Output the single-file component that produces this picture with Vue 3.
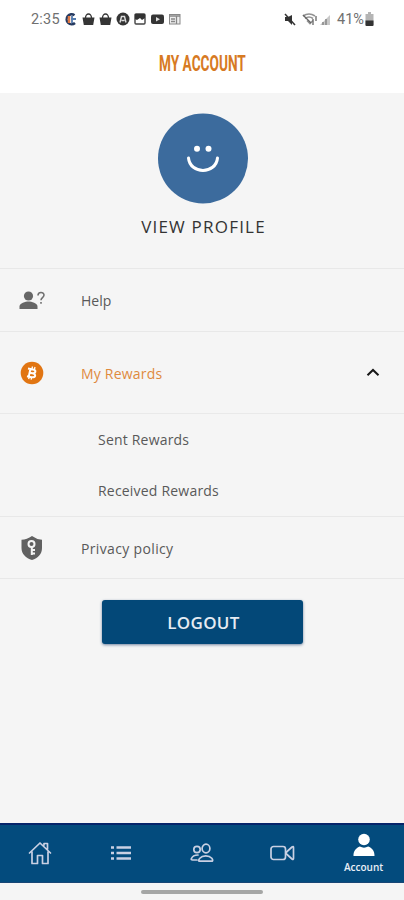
<script setup>
const links = ['Sent Rewards', 'Received Rewards']
</script>

<template>
  <main class="screen">
    <div class="status">
      <span class="clock">2:35</span>
      <svg class="notifs" width="120" height="16" viewBox="0 0 120 16">
        <path d="M10.5 4.2A5 5 0 1 0 11 12" fill="none" stroke="#263a60" stroke-width="2.5" />
        <path d="M5 5v7" stroke="#e07a45" stroke-width="2.5" />
        <path d="M7 8h5M8 5v7" stroke="#557db0" stroke-width="1.8" />
        <g fill="#353535">
          <path d="M18.5 6.5h12l-1.3 7.5h-9.4zM35.5 6.5h12l-1.3 7.5h-9.4z" />
          <path d="M21.5 7a3 4 0 0 1 6 0M38.5 7a3 4 0 0 1 6 0" fill="none" stroke="#353535" stroke-width="1.3" />
          <circle cx="59" cy="8" r="6.5" />
          <rect x="87" y="3.5" width="13" height="9.5" rx="2" />
        </g>
        <path d="M56 11.5l1.5-6h3l1.5 6M57.5 9.500h3" fill="none" stroke="#ddd" stroke-width="1.4" />
        <rect x="71" y="3" width="10" height="10" rx="1" fill="#fff" stroke="#444" stroke-width="1.4" />
        <path d="M71 3h10v4l-3 2-2-2-3 2-2-1z" fill="#333" />
        <path d="M92 6l4 2.200-4 2.200z" fill="#ddd" />
        <rect x="105.500" y="3.500" width="10.500" height="9.500" fill="#eee" stroke="#888" />
        <path d="M105.500 5h10.500M112.500 5v8M107 8h4M107 10.500h4" stroke="#888" stroke-width="1.300" />
      </svg>
      <svg class="signals" width="50" height="16" viewBox="0 0 50 16">
        <path d="M2 6h3l4-2v10L5 10H2z" fill="#333" />
        <path d="M2 3l10 11" stroke="#333" stroke-width="1.500" />
        <path d="M20 5q6-4 12 0M22 7.500q4-3 8 0M24 9.500l3 3 3-3" fill="none" stroke="#929292" stroke-width="1.600" />
        <path d="M20 4l8 8M30 8v6M33 5v5" stroke="#666" stroke-width="1.300" />
        <path d="M37 14l10-10v10z" fill="#c9c9c9" />
        <path d="M40 14v-3M43 14V8" stroke="#888" stroke-width="1.500" />
      </svg>
      <span class="percent">41%</span>
      <svg class="battery" width="9" height="14" viewBox="0 0 9 14">
        <path d="M3 0h3v2h2.500v11q0 1-1 1h-6q-1 0-1-1V2H3z" fill="#b5b5b5" />
        <path d="M.5 8.500h8V13q0 1-1 1h-6q-1 0-1-1z" fill="#333" />
      </svg>
    </div>

    <header class="title"><h1>MY ACCOUNT</h1></header>

    <section class="profile">
      <svg width="91" height="91" viewBox="0 0 91 91">
        <circle cx="46" cy="45.500" r="45" fill="#3c6b9d" />
        <circle cx="40" cy="35.700" r="3" fill="#fff" />
        <circle cx="51.500" cy="35.700" r="3" fill="#fff" />
        <path d="M31.500 45C33 61.500 59 61.500 60.500 45" fill="none" stroke="#fff" stroke-width="3" stroke-linecap="round" />
      </svg>
      <span class="view">VIEW PROFILE</span>
    </section>

    <section class="row help">
      <svg width="27" height="24" viewBox="0 0 27 24">
        <circle cx="9.500" cy="8" r="4.600" fill="#666" />
        <path d="M.5 21v-2.500c0-3.500 6-5 9-5s9 1.500 9 5V21z" fill="#666" />
        <path d="M19 7.500c0-4 6-4 6-.4 0 2.600-3 2.500-3 5.200M22 14v1.800" fill="none" stroke="#707070" stroke-width="1.600" />
      </svg>
      <span>Help</span>
    </section>

    <section class="row rewards">
      <svg width="27" height="24" viewBox="0 0 27 24">
        <circle cx="13" cy="12" r="11.300" fill="#e17512" />
        <g fill="none" stroke="#fff" stroke-width="2">
          <path d="M9 7.500l5 1c4 .8 2.500 4.300-.7 3.700l-2.500-.5M8 15.200l4.500 1c4.500.8 5-3.400.8-4M11.500 7.500l-1.800 8.500" />
          <path d="M13.500 5.500l-.6 2.700M16 6l-.6 2.700M10.300 15.500l-.6 2.700M12.700 16l-.6 2.700" stroke-width="1.300" />
        </g>
      </svg>
      <span>My Rewards</span>
      <svg class="chevron" width="14" height="9" viewBox="0 0 14 9">
        <path d="M1.500 7.300L7 2l5.500 5.300" fill="none" stroke="#171717" stroke-width="2" />
      </svg>
    </section>

    <section class="sublist">
      <div v-for="link in links" :key="link" class="sub"><span>{{ link }}</span></div>
    </section>

    <section class="row privacy">
      <svg width="27" height="26" viewBox="0 0 27 26">
        <path d="M13 1q5 3.700 10 3.700V13c0 6-4 10-10 12C7 23 2.500 19 2.500 13V4.700Q8 4.700 13 1z" fill="#616161" />
        <circle cx="12.500" cy="9" r="3" fill="none" stroke="#f5f5f5" stroke-width="2" />
        <path d="M12.800 12v8M13 15h3M13 18.500h3" stroke="#f5f5f5" stroke-width="2" />
      </svg>
      <span>Privacy policy</span>
    </section>

    <div class="actions"><button><span>LOGOUT</span></button></div>

    <nav>
      <div class="tab">
        <svg width="24" height="24" viewBox="0 0 24 24" class="line">
          <path d="M1.500 12L12 2l10.500 10M4 10.500v12h5.500v-8h5v8H20v-12M16 4V2.500h3.500V8" />
        </svg>
      </div>
      <div class="tab">
        <svg width="22" height="18" viewBox="0 0 22 18">
          <path d="M1 3.500h3M1 9h3M1 14.500h3M6.500 3.500H21M6.500 9H21M6.500 14.500H21" stroke="#c9d0e3" stroke-width="2.700" />
        </svg>
      </div>
      <div class="tab">
        <svg width="24" height="20" viewBox="0 0 24 20" class="line">
          <circle cx="7" cy="6.500" r="3.200" />
          <ellipse cx="16" cy="5.500" rx="3.900" ry="4.300" />
          <path d="M9 18.200h13.200c1-.6.3-2-.4-2.900-2.800-3.200-9.300-3.200-12 0-.9 1-1.500 2.300-.8 2.900zM8 12c-4 0-6 2-6.700 3.700-.3 1 .3 1.300 1.200 1.300H7" />
        </svg>
      </div>
      <div class="tab">
        <svg width="25" height="16" viewBox="0 0 25 16" class="line">
          <rect x="1" y="1.500" width="14.500" height="13" rx="2.500" />
          <path d="M16.500 7l5.500-5q1.500-1 1.500.5v11q0 1.500-1.500.5l-5.500-5z" />
        </svg>
      </div>
      <div class="tab active">
        <svg width="22" height="24" viewBox="0 0 22 24">
          <circle cx="11" cy="6.500" r="5.800" fill="#fff" />
          <path d="M.5 23c-.3-5 3-8.500 6.300-9.500 3 1.500 5.400 1.500 8.400 0 3.500 1 6.600 4.500 6.300 9.500z" fill="#fff" />
        </svg>
        <span>Account</span>
      </div>
    </nav>
    <footer><i></i></footer>
  </main>
</template>

<style>
body { margin: 0; }
</style>

<style scoped>
* { box-sizing: border-box; }
.screen { width: 404px; height: 900px; background: #f5f5f5; font-family: "Open Sans", "Noto Sans", sans-serif; color: #595959; overflow: hidden; display: flex; flex-direction: column; }
svg { display: block; flex: none; }
.status { height: 38px; background: #fff; display: flex; align-items: center; padding: 0 29px 0 31px; font: 14.500px Roboto, sans-serif; color: #707070; flex: none; }
.clock { width: 33px; letter-spacing: .2px; white-space: nowrap; }
.signals { margin-left: 99px; }
.percent { width: 29px; margin-left: 4px; white-space: nowrap; }
.battery { margin-left: -1px; }
.title { height: 55px; flex: none; background: #fff; display: flex; justify-content: center; padding: 12px 0 0 1px; }
h1 { margin: 0; font: bold 21.500px/27px Roboto, sans-serif; color: #d77a23; white-space: nowrap; transform: scaleX(.635); }
.profile { height: 175px; flex: none; display: flex; flex-direction: column; align-items: center; padding-top: 20px; }
.view { margin-top: 10px; font-size: 17px; line-height: 25px; letter-spacing: 1.200px; color: #333; padding-left: 3px; }
.row { flex: none; display: flex; align-items: center; padding-left: 19px; border-top: 1px solid #e8e8e8; font-size: 14px; }
.row > span { margin-left: 35px; }
.help { height: 63px; }
.help > span { padding-top: 1px; }
.rewards { height: 82px; color: #df8a3d; padding-right: 24px; }
.rewards > span { letter-spacing: .2px; padding-top: 1px; }
.chevron { margin-left: auto; }
.sublist { height: 103px; flex: none; border-top: 1px solid #e9e9e9; }
.sub { height: 51px; display: flex; align-items: center; padding: 0 0 1px 98px; font-size: 14px; letter-spacing: .2px; }
.privacy { height: 63px; border-bottom: 1px solid #e8e8e8; }
.privacy > span { letter-spacing: .35px; padding-top: 1px; }
.actions { display: flex; justify-content: center; padding: 21px 0 0 1px; flex: none; }
button { width: 201px; height: 44px; border: 0; border-radius: 3px; background: #034878; color: #e5ebf2; font: 600 17px "Open Sans", sans-serif; letter-spacing: .3px; box-shadow: 0 1px 3px #7184a0; padding: 0 0 0 2px; }
nav { height: 60px; margin-top: auto; flex: none; background: #034b7d; border-top: 2px solid #06246a; border-bottom: 1px solid #184675; display: grid; grid-template-columns: repeat(5, 1fr); }
.tab { display: flex; flex-direction: column; align-items: center; justify-content: center; padding-bottom: 1px; }
.line { fill: none; stroke: #c9d0e3; stroke-width: 1.700; stroke-linejoin: round; stroke-linecap: round; }
.active { color: #e9eff7; font-size: 10px; font-weight: 600; line-height: 14px; }
.active span { margin-top: 3px; }
footer { height: 17px; flex: none; display: flex; justify-content: center; padding-top: 7px; }
footer i { width: 122px; height: 4px; border-radius: 2px; background: #a5a6a5; }
</style>
